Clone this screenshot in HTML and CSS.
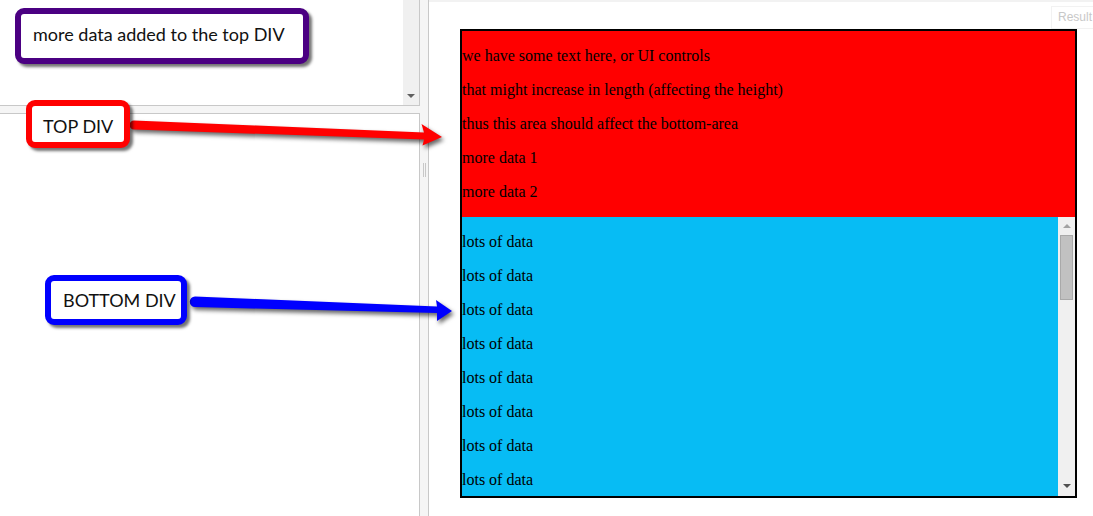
FILE: index.html
```html
<!DOCTYPE html>
<html lang="en">
<head>
  <meta charset="UTF-8">
  <title>Top / Bottom DIV</title>
  <link rel="stylesheet" href="styles.css">
</head>
<body>
  <div class="editors">
    <div class="pane pane-html">
      <div class="vscroll"><span class="arrow-down"></span></div>
    </div>
    <div class="pane pane-css"></div>
  </div>

  <div class="gutter"><span class="grip"></span></div>

  <div class="result">
    <span class="result-label">Result</span>
    <div class="container">
      <div class="top">
        <p>we have some text here, or UI controls</p>
        <p>that might increase in length (affecting the height)</p>
        <p>thus this area should affect the bottom-area</p>
        <p>more data 1</p>
        <p>more data 2</p>
      </div>
      <div class="bottom">
        <div class="list">
          <p>lots of data</p>
          <p>lots of data</p>
          <p>lots of data</p>
          <p>lots of data</p>
          <p>lots of data</p>
          <p>lots of data</p>
          <p>lots of data</p>
          <p>lots of data</p>
        </div>
        <div class="scrollbar">
          <span class="sb-up"></span>
          <span class="sb-thumb"></span>
          <span class="sb-down"></span>
        </div>
      </div>
    </div>
  </div>

  <!-- annotation arrows -->
  <svg class="arrows" width="1093" height="516" viewBox="0 0 1093 516">
    <path class="arrow-red" d="M134 120.5 L424 132.5 L421.5 124 L442 137 L422.5 145.5 L424 139.5 L134 129.5 A4.5 4.5 0 0 1 134 120.5 Z" />
    <path class="arrow-blue" d="M195 296.5 L437 306.5 L436 300 L452 311 L437 321 L437 313 L195 307 A5.25 5.25 0 0 1 195 296.5 Z" />
  </svg>

  <div class="note note-purple">more data added to the top DIV</div>
  <div class="note note-red">TOP DIV</div>
  <div class="note note-blue">BOTTOM DIV</div>
</body>
</html>
```

FILE: styles.css
```css
body {
  margin: 0;
  display: flex;
  height: 516px;
  overflow: hidden;
  font-family: "Liberation Serif", serif;
  background: #fff;
}

/* left editor column */
.editors {
  width: 420px;
  display: flex;
  flex-direction: column;
  background: #f5f5f5;
}

.pane {
  background: #fff;
  border-right: 1px solid #c8c8c8;
  box-sizing: border-box;
}

.pane-html {
  height: 106px;
  border-bottom: 1px solid #c8c8c8;
  margin-bottom: 7px;
  display: flex;
  justify-content: flex-end;
}

.pane-css {
  flex: 1;
  border-top: 1px solid #c8c8c8;
}

.vscroll {
  width: 16px;
  background: #f0f0f0;
  display: flex;
  flex-direction: column;
  justify-content: flex-end;
  align-items: center;
  padding-bottom: 7px;
  box-sizing: border-box;
}

.arrow-down {
  width: 0;
  height: 0;
  border-left: 4px solid transparent;
  border-right: 4px solid transparent;
  border-top: 4px solid #606060;
}

.gutter {
  width: 8px;
  background: #f5f5f5;
  border-right: 1px solid #c8c8c8;
  display: flex;
  justify-content: center;
  padding-top: 163px;
  box-sizing: content-box;
}

.grip {
  width: 1px;
  height: 14px;
  border-left: 1px solid #c8c8c8;
  border-right: 1px solid #c8c8c8;
}

/* result panel */
.result {
  flex: 1;
  position: relative;
  border-top: 2px solid #f2f2f2;
  padding: 27px 0 0 31px;
}

.result-label {
  position: absolute;
  top: 4px;
  right: 0;
  width: 42px;
  height: 23px;
  box-sizing: border-box;
  border: 1px solid #f2f2f2;
  border-right: none;
  padding-left: 6px;
  font-family: "Liberation Sans", Arial, sans-serif;
  font-size: 12px;
  line-height: 21px;
  color: #c8c8c8;
}

.container {
  width: 613px;
  height: 465px;
  border: 2px solid #000;
  display: flex;
  flex-direction: column;
}

.container p {
  margin: 16px 0;
  font-size: 16px;
  line-height: 18px;
}

.top {
  background: #f00;
  display: flow-root;
}

.bottom {
  flex: 1;
  min-height: 0;
  display: flex;
  background: #07bcf4;
}

.list {
  flex: 1;
  overflow: hidden;
  display: flow-root;
}

.scrollbar {
  width: 17px;
  background: #f0f0f0;
  display: flex;
  flex-direction: column;
  align-items: center;
}

.sb-up {
  margin-top: 7px;
  width: 0;
  height: 0;
  border-left: 4px solid transparent;
  border-right: 4px solid transparent;
  border-bottom: 4px solid #a3a3a3;
}

.sb-thumb {
  margin-top: 7px;
  width: 13px;
  height: 65px;
  box-sizing: border-box;
  background: #c1c1c1;
  border: 1px solid #a9a9a9;
}

.sb-down {
  margin-top: auto;
  margin-bottom: 8px;
  width: 0;
  height: 0;
  border-left: 4px solid transparent;
  border-right: 4px solid transparent;
  border-top: 4px solid #505050;
}

/* callouts */
.arrows {
  position: absolute;
  top: 0;
  left: 0;
  pointer-events: none;
  filter: drop-shadow(2px 3px 2px rgba(0, 0, 0, 0.6));
}

.arrow-red {
  fill: #f00;
}

.arrow-blue {
  fill: #00f;
}

.note {
  position: absolute;
  box-sizing: border-box;
  display: flex;
  align-items: center;
  background: #fff;
  border: 6px solid;
  border-radius: 9px;
  box-shadow: 3px 3px 3px rgba(0, 0, 0, 0.55);
  font-family: Lato, "Noto Sans", sans-serif;
  font-size: 18px;
  white-space: nowrap;
  color: #111;
}

.note-purple {
  left: 15px;
  top: 8px;
  width: 294px;
  height: 56px;
  padding: 0 0 4px 12px;
  border-color: #4b0082;
}

.note-red {
  left: 26px;
  top: 100px;
  width: 104px;
  height: 48px;
  padding: 3px 0 0 11px;
  border-color: #f00;
}

.note-blue {
  left: 45px;
  top: 275px;
  width: 142px;
  height: 50px;
  padding-left: 12px;
  border-color: #00f;
}
```
